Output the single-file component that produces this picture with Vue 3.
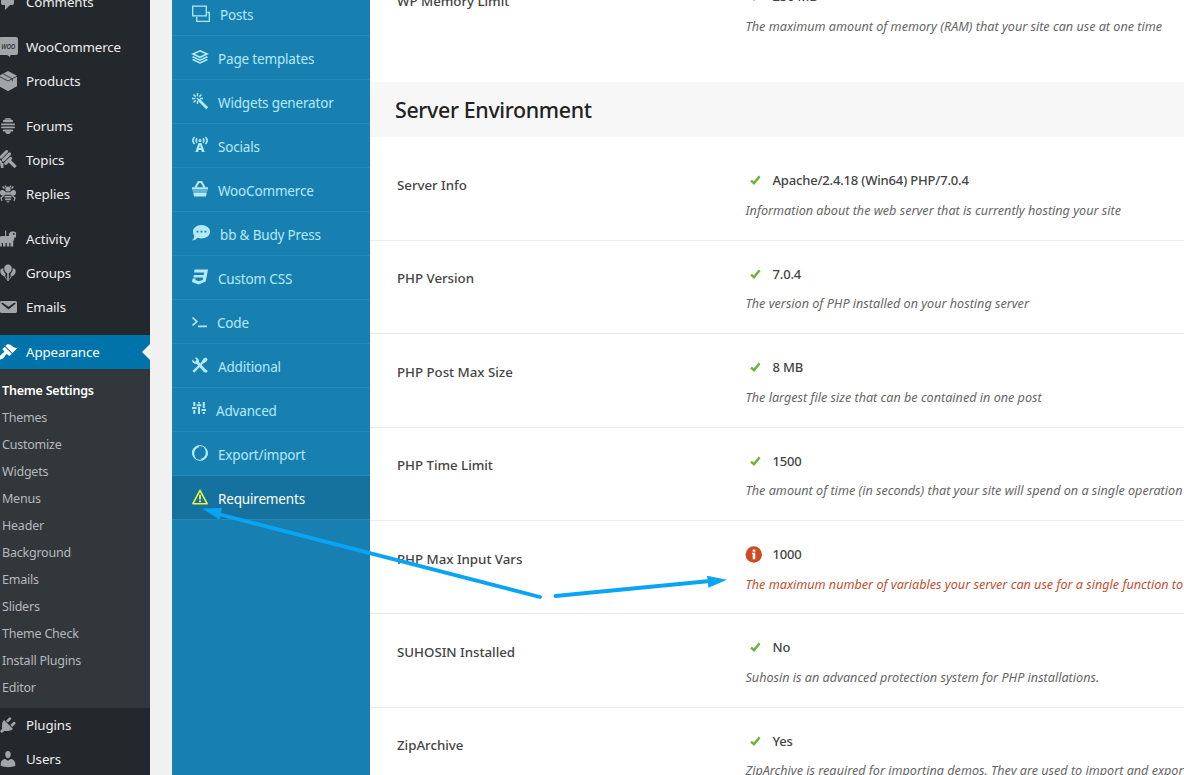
<script setup>
const adminGroups = [
  [{ label: 'Comments', icon: 'comments' }],
  [
    { label: 'WooCommerce', icon: 'woo' },
    { label: 'Products', icon: 'products' },
  ],
  [
    { label: 'Forums', icon: 'hive' },
    { label: 'Topics', icon: 'topics' },
    { label: 'Replies', icon: 'bee' },
  ],
  [
    { label: 'Activity', icon: 'activity' },
    { label: 'Groups', icon: 'groups' },
    { label: 'Emails', icon: 'email' },
  ],
  [{ label: 'Appearance', icon: 'brush', current: true }],
]
const submenu = [
  'Theme Settings', 'Themes', 'Customize', 'Widgets', 'Menus', 'Header',
  'Background', 'Emails', 'Sliders', 'Theme Check', 'Install Plugins', 'Editor',
]
const adminTail = [
  { label: 'Plugins', icon: 'plugins' },
  { label: 'Users', icon: 'users' },
]

const icons = {
  comments: '<path d="M5 2h9q.82 0 1.41.59T16 4v7q0 .82-.59 1.41T14 13h-2l-5 5v-5H5q-.82 0-1.41-.59T3 11V4q0-.82.59-1.41T5 2z"/>',
  woo: '<path d="M3 0h15q2 0 2 2v14q0 2-2 2h-5.500l-.5 2-3-2H3q-2 0-2-2V2q0-2 2-2z"/><text x="3.200" y="11.800" font-size="7.500" font-weight="500" font-style="italic" textLength="14" lengthAdjust="spacingAndGlyphs" font-family="Noto Sans, sans-serif" fill="#23282d">WOO</text>',
  products: '<path d="M10 0 19 4.800v10.400l-9 5-9-5V4.800z"/><path d="m1 5.300 9 4.700 9-4.700M5.300 3l9 4.800v2.400" fill="none" stroke="#23282d" stroke-width=".8"/>',
  hive: '<path d="M8 2.200h4q1.500 0 1.500 1.600h-7Q6.500 2.200 8 2.200z"/><rect x="4.800" y="4" width="10.400" height="2.200" rx="1.100"/><rect x="3" y="7.500" width="14" height="1.700" rx=".8"/><rect x="3" y="10.600" width="14" height="1.700" rx=".8"/><rect x="4.800" y="13.600" width="10.400" height="2" rx="1"/><path d="M7 15.300h6q-.5 2.700-2 2.700H9q-1.500 0-2-2.700z"/>',
  topics: '<g transform="rotate(-45 10 10)"><rect x="5.500" y="1.500" width="11" height="3" rx="1.500"/><rect x="5" y="5.200" width="12" height="3.200" rx="1.600"/><rect x="4.500" y="9.200" width="10" height="3" rx="1.500"/><rect x="2" y="3.500" width="2.600" height="4" rx="1"/></g><path d="m11.500 8.500 7.300 7.500-2.200 2.200L9 11zM2 13h3.500v5H3z"/>',
  bee: '<circle cx="10" cy="5" r="2.600"/><path d="M8 3 6.800 1.600M12 3l1.200-1.400" stroke="currentColor" stroke-width="1.200"/><path d="M7.800 8C5 5 1.800 5.500 2 9c.4 3 3.400 3.600 5.600 1.600zm4.400 0c2.800-3 6-2.500 5.800 1-.4 3-3.400 3.600-5.600 1.600z"/><path d="M7.300 8.300h5.400v2.400H7.300zM6.500 11.700h7v1.800h-7zM6.500 14.400h7l-.8 1.800H7.300zM8 17.200h4l-2 1.600z"/><path d="M5.500 12 3 14l1 3M14.500 12l2.500 2-1 3M6.500 4.500 4.500 2.500M13.500 4.500l2-2" fill="none" stroke="currentColor" stroke-width="1.300"/>',
  activity: '<path d="M1.500 9q0-2 2.500-2h3V1.500h1.200V7h2.600q0-4.500 3.200-4.500h2q2.300 0 2.300 2.500H18v3.500h-1.800V10q0 1.500-1 2v5.500h-2.700V14h-1.200v3.500H8.800V14H7.500v3.500H5V14H3.800v3.500H1.500z"/><circle cx="15.800" cy="5" r=".9" fill="#23282d"/>',
  groups: '<path d="M10 1.500c2.500 0 3.800 1.800 3.800 4 0 2-1.400 4-3 5v7.500H9.200v-7.500c-1.600-1-3-3-3-5 0-2.200 1.300-4 3.800-4z"/><path d="M5.300 5.200C3 5.200 2 7 2.300 9c.4 2.200 2 3.800 4 4.200l2 3.300.6-.3-1.700-3.400.4-2C6 9.500 5.200 7.500 5.300 5.200zm9.400 0C17 5.200 18 7 17.700 9c-.4 2.200-2 3.800-4 4.200l-2 3.300-.6-.3 1.700-3.400-.4-2c1.600-1.300 2.400-3.300 2.300-5.600z"/>',
  email: '<path d="M3.870 4h13.250C18.370 4 19 4.590 19 5.790v8.420c0 1.190-.63 1.790-1.880 1.790H3.870c-1.250 0-1.880-.6-1.880-1.790V5.790c0-1.200.63-1.790 1.880-1.790zm6.620 8.600l6.740-5.530c.24-.2.43-.66.13-1.070-.29-.41-.82-.42-1.170-.17l-5.700 3.860L4.800 5.830c-.35-.25-.88-.24-1.170.17-.3.41-.11.87.13 1.070z"/>',
  brush: '<path d="M14.480 11.060L7.410 3.990l1.500-1.500c.5-.56 2.300-.47 3.510.32 1.210.8 1.430 1.280 2.910 2.100 1.180.64 2.450 1.260 4.450.85zm-.71.71L6.700 4.700 4.930 6.470c-.39.39-.39 1.020 0 1.410l1.060 1.060c.39.39.39 1.030 0 1.420-.6.6-1.430 1.110-2.210 1.690-.35.26-.7.53-1.010.84C1.430 14.230.4 16.080 1.400 17.070c.99 1 2.840-.03 4.180-1.360.31-.31.58-.66.85-1.020.57-.78 1.080-1.610 1.690-2.210.39-.39 1.020-.39 1.410 0l1.060 1.060c.39.39 1.020.39 1.410 0z"/>',
  plugins: '<path d="M13.110 4.360L9.870 7.600 8 5.730l3.240-3.240c.35-.34 1.050-.2 1.560.32.52.51.66 1.210.31 1.550zm-8 1.770l.91-1.120 9.010 9.010-1.190.84c-.71.71-2.630 1.160-3.820 1.160H6.140L4.900 17.260c-.59.59-1.540.59-2.120 0-.59-.58-.59-1.530 0-2.120l1.240-1.240v-3.880c0-1.130.4-3.190 1.090-3.890zm7.260 3.970l3.240-3.240c.34-.35 1.040-.21 1.550.31.52.51.66 1.210.31 1.550l-3.240 3.250z"/>',
  users: '<path d="M10 9.250c-2.270 0-2.730-3.440-2.730-3.440C7 4.020 7.820 2 9.970 2c2.160 0 2.980 2.020 2.710 3.810 0 0-.41 3.440-2.680 3.440zm0 2.570L12.720 10c2.390 0 4.520 2.330 4.520 4.530v2.490s-3.650 1.130-7.240 1.130c-3.650 0-7.240-1.130-7.240-1.130v-2.490c0-2.250 1.940-4.480 4.470-4.480z"/>',
}

// Theme panel icons are drawn on an 18px high grid, one unit per pixel.
const panel = [
  { label: 'Posts', w: 18, svg: '<path d="M.7 1.200h13.600v9.600H.7zM4.700 12v4.300h12.600V7.500h-2" fill="none" stroke="currentColor" stroke-width="1.300"/>' },
  { label: 'Page templates', w: 16, svg: '<path d="m8 1.800 7 3.200-7 3.300L1 5z" fill="none" stroke="currentColor" stroke-width="1.600"/><path d="m.6 7.800 7.400 3.400 7.400-3.400M.6 10.500 8 13.900l7.400-3.400" fill="none" stroke="currentColor" stroke-width="1.600"/>' },
  { label: 'Widgets generator', w: 16, svg: '<path d="m7 7 8.200 8.200" stroke="currentColor" stroke-width="2.800"/><path d="M5.500 0v3.300M0 5.500h3.300M1.500 1.500 3.800 3.800M9.500 1.500 7.300 3.700M1.500 9.500l2.200-2.200M5.500 7.800V11M8 5.500h3M5 5l2.500 2.500" stroke="currentColor" stroke-width="1.400"/>' },
  { label: 'Socials', w: 16, svg: '<path d="M2.600 0Q-.8 3.500 2.600 7M13.400 0q3.400 3.500 0 7M5 1.300Q3.200 3.500 5 5.700M11 1.300q1.800 2.200 0 4.400" fill="none" stroke="currentColor" stroke-width="1.500"/><circle cx="8" cy="3.500" r="1.500"/><path d="M6.500 6h3l3.200 9h-2.800l-.6-2H6.700l-.6 2H3.300zM8 8 7.200 11h1.600z" fill-rule="evenodd"/>' },
  { label: 'WooCommerce', w: 16, svg: '<path d="M3.500 6.500 6.500 1h3l3 5.500" fill="none" stroke="currentColor" stroke-width="2"/><path d="M0 6.300h16v2.200H0zM.7 9.500h14.600v1H.7zM1.200 11.500h13.600L14 15.500H2z"/>' },
  { label: 'bb & Budy Press', w: 18, svg: '<path fill-rule="evenodd" d="M9.500 0C14.500 0 18 3 18 6.700s-3.500 6.700-8.500 6.700q-2 0-3.700-.6Q3.500 15.300.2 15.500 2.500 13.500 2.300 10.800 1 9 1 6.700C1 3 4.500 0 9.500 0zM4.500 5.700v1.900h1.900V5.700zm4 0v1.900h1.900V5.700zm4 0v1.900h1.900V5.700z"/>' },
  { label: 'Custom CSS', w: 16, svg: '<path d="M2.600.5H16l-2.300 12-7.200 3L0 12.900l.7-3.500h3l-.3 1.500 3.400 1.300 3.900-1.300.4-2.300H1.400l.5-2.500H11.700l.4-2.600H2z"/>' },
  { label: 'Code', w: 15, svg: '<path d="m.5 4.500 4.300 4-4.300 4M6 13.300h9" fill="none" stroke="currentColor" stroke-width="1.700"/>' },
  { label: 'Additional', w: 16, svg: '<path d="M15.700 2.300 13.800.4 11.500 1.600 8.800 6l-.6.7-7.700 7 1.700 2 7.500-7.800.5-.6 4.300-2.800z"/><path d="M5.200 5.200 13.500 14.400" stroke="currentColor" stroke-width="3"/><path d="M.3 2.200Q-.4 6.500 3.700 6.800L6 7.200 7 5.800Q7.500.5 2.700.6L4.400 2.500 3.900 4.300 2.200 4.600zM13.500 12.200l2.400 1.700-1.800 2-2.300-2z"/>' },
  { label: 'Advanced', w: 14, svg: '<path d="M2.300 1v4M2.300 9v4M7 1v1.500M7 6v7M11.800 1v6M11.800 11v2" stroke="currentColor" stroke-width="2"/><path d="M0 6h4.600v2H0zM4.700 3.300h4.600v2H4.700zM9.500 8h4.600v2H9.500z"/>' },
  { label: 'Export/import', w: 16, svg: '<circle cx="8" cy="8" r="7.400" fill="none" stroke="currentColor" stroke-width="1"/><path d="M5.500.5Q-.2 3 .2 8q.3 4.500 4.300 6.800Q1.500 10 2.500 6.500 3.500 3.200 7.500 2zM10.500 15.500Q16.200 13 15.800 8q-.3-4.500-4.300-6.800 3 4.800 2 8.300-1 3.300-5 4.500z"/>' },
  { label: 'Requirements', w: 16, active: true, svg: '<path d="m8 1.300 7.200 13.500H.8z" fill="none" stroke="currentColor" stroke-width="1.600" stroke-linejoin="round"/><path d="M8 5.700v4.800M8 11.500v1.800" stroke="currentColor" stroke-width="1.900"/>' },
]

const memory = { label: 'WP Memory Limit', value: '256 MB', desc: 'The maximum amount of memory (RAM) that your site can use at one time' }
const server = [
  { label: 'Server Info', value: 'Apache/2.4.18 (Win64) PHP/7.0.4', desc: 'Information about the web server that is currently hosting your site' },
  { label: 'PHP Version', value: '7.0.4', desc: 'The version of PHP installed on your hosting server' },
  { label: 'PHP Post Max Size', value: '8 MB', desc: 'The largest file size that can be contained in one post' },
  { label: 'PHP Time Limit', value: '1500', desc: 'The amount of time (in seconds) that your site will spend on a single operation' },
  { label: 'PHP Max Input Vars', value: '1000', desc: 'The maximum number of variables your server can use for a single function to', warn: true },
  { label: 'SUHOSIN Installed', value: 'No', desc: 'Suhosin is an advanced protection system for PHP installations.' },
  { label: 'ZipArchive', value: 'Yes', desc: 'ZipArchive is required for importing demos. They are used to import and export' },
]
const sections = [
  { title: '', rows: [memory] },
  { title: 'Server Environment', rows: server },
]
</script>

<template>
  <div class="screen">
    <aside class="admin">
      <div v-for="(group, i) in adminGroups" :key="i" class="group">
        <a v-for="item in group" :key="item.label" class="item" :class="{ current: item.current }">
          <svg class="dash" viewBox="0 0 20 20" v-html="icons[item.icon]"></svg>
          <span>{{ item.label }}</span>
        </a>
      </div>
      <div class="submenu">
        <a v-for="(name, i) in submenu" :key="name" :class="{ on: i === 0 }">{{ name }}</a>
      </div>
      <a v-for="item in adminTail" :key="item.label" class="item">
        <svg class="dash" viewBox="0 0 20 20" v-html="icons[item.icon]"></svg>
        <span>{{ item.label }}</span>
      </a>
    </aside>

    <nav class="panel">
      <a v-for="p in panel" :key="p.label" :class="{ active: p.active }">
        <svg :width="p.w" height="18" :viewBox="`0 0 ${p.w} 18`" v-html="p.svg"></svg>
        <span>{{ p.label }}</span>
      </a>
    </nav>

    <main class="content">
      <section v-for="s in sections" :key="s.title">
        <h2 v-if="s.title">{{ s.title }}</h2>
        <div class="rows">
          <div v-for="r in s.rows" :key="r.label" class="row" :class="{ warn: r.warn }">
            <div class="label">{{ r.label }}</div>
            <div class="info">
              <div class="value">
                <svg v-if="r.warn" width="17" height="18" viewBox="0 0 17 18">
                  <circle cx="8.800" cy="9.500" r="8.200" fill="#d04a22" />
                  <path d="M7.700 4.500h2.600v2.200H7.700zM7 7.700h3.300v6.500H7.700V9H7z" fill="#fff" />
                </svg>
                <svg v-else width="17" height="18" viewBox="0 0 17 18">
                  <path d="M6 9.600 9 12.300 14.600 5.200" fill="none" stroke="#69b53b" stroke-width="2.500" />
                </svg>
                <span>{{ r.value }}</span>
              </div>
              <div class="desc">{{ r.desc }}</div>
            </div>
          </div>
        </div>
      </section>
    </main>

    <svg class="arrows" width="1184" height="775" viewBox="0 0 1184 775">
      <g stroke="#0aa4f5" stroke-width="3.800" stroke-linecap="round">
        <path d="M540 597 218 514M555.500 596 710 581" />
      </g>
      <path d="m202 508.500 20-.5-2.500 11.500zM727 579.700l-20-4 1.500 12z" fill="#0aa4f5" />
    </svg>
  </div>
</template>

<style>
body {
  margin: 0;
  overflow: hidden;
}
</style>

<style scoped>
.screen {
  position: relative;
  display: flex;
  width: 1184px;
  height: 775px;
  overflow: hidden;
  background: #f1f1f1;
  font-family: "Noto Sans", "Open Sans", sans-serif;
}
.admin {
  flex: none;
  width: 150px;
  height: 791px;
  margin-top: -15px;
  background: #23282d;
}
.group + .group {
  margin-top: 11px;
}
.item {
  position: relative;
  display: flex;
  align-items: center;
  gap: 8px;
  height: 34px;
  margin-left: -2px;
  color: #eee;
  font-size: 13.300px;
  letter-spacing: -.1px;
}
.dash {
  width: 20px;
  height: 20px;
  fill: currentColor;
  color: #a0a5aa;
}
.item.current {
  background: #0073aa;
  color: #fff;
}
.current .dash {
  color: #fff;
}
.current::after {
  content: "";
  position: absolute;
  right: 0;
  border: 8px solid transparent;
  border-right-color: #f1f1f1;
}
.submenu {
  padding: 8px 0 7px 2px;
  background: #32373c;
}
.submenu a {
  display: block;
  height: 27px;
  line-height: 27px;
  color: #b4b9be;
  font-size: 12.500px;
  letter-spacing: -.22px;
}
.submenu a.on {
  color: #fff;
  font-weight: 600;
}
.panel {
  flex: none;
  box-sizing: border-box;
  width: 198px;
  height: 783px;
  margin: -8px 0 0 22px;
  background: #1880b0;
}
.panel a {
  display: flex;
  box-sizing: border-box;
  align-items: center;
  gap: 10px;
  height: 44px;
  padding: 0 0 0 20px;
  border-bottom: 1px solid #2389b8;
  color: #b4e9fc;
  font-size: 13.500px;
  letter-spacing: -.17px;
}
.panel svg {
  fill: currentColor;
  overflow: visible;
}
.panel span {
  padding-top: 3px;
}
.panel a.active {
  background: #15719d;
  color: #fff;
}
.active svg {
  color: #e9f443;
}
.content {
  flex: 1;
  min-width: 0;
  background: #fff;
  margin-top: -36.600px;
}
h2 {
  height: 55px;
  margin: 25.200px 0 10.500px;
  padding-left: 25px;
  background: #f7f7f7;
  color: #222;
  font-size: 21.400px;
  font-weight: 500;
  letter-spacing: -.35px;
  line-height: 55px;
}
.row {
  display: flex;
  box-sizing: border-box;
  height: 93.400px;
  padding: 23.500px 0 0 27px;
  border-bottom: 1px solid #ebebeb;
}
.row:last-child {
  border-color: transparent;
}
.label {
  width: 348px;
  padding-top: 4px;
  color: #444;
  font-size: 13.300px;
  font-weight: 550;
  letter-spacing: -.03px;
  line-height: 20px;
}
.info {
  flex: 1;
  min-width: 0;
}
.value {
  display: flex;
  align-items: center;
  gap: 10.500px;
  height: 19px;
  color: #444;
  font-size: 13px;
  font-weight: 500;
  letter-spacing: -.17px;
}
.desc {
  margin: 11px 0 0 .5px;
  color: #666;
  font-size: 12.620px;
  font-style: italic;
  line-height: 20px;
  white-space: nowrap;
}
.warn .desc {
  color: #c0502f;
}
.arrows {
  position: absolute;
  inset: 0;
  fill: none;
  pointer-events: none;
}
</style>
